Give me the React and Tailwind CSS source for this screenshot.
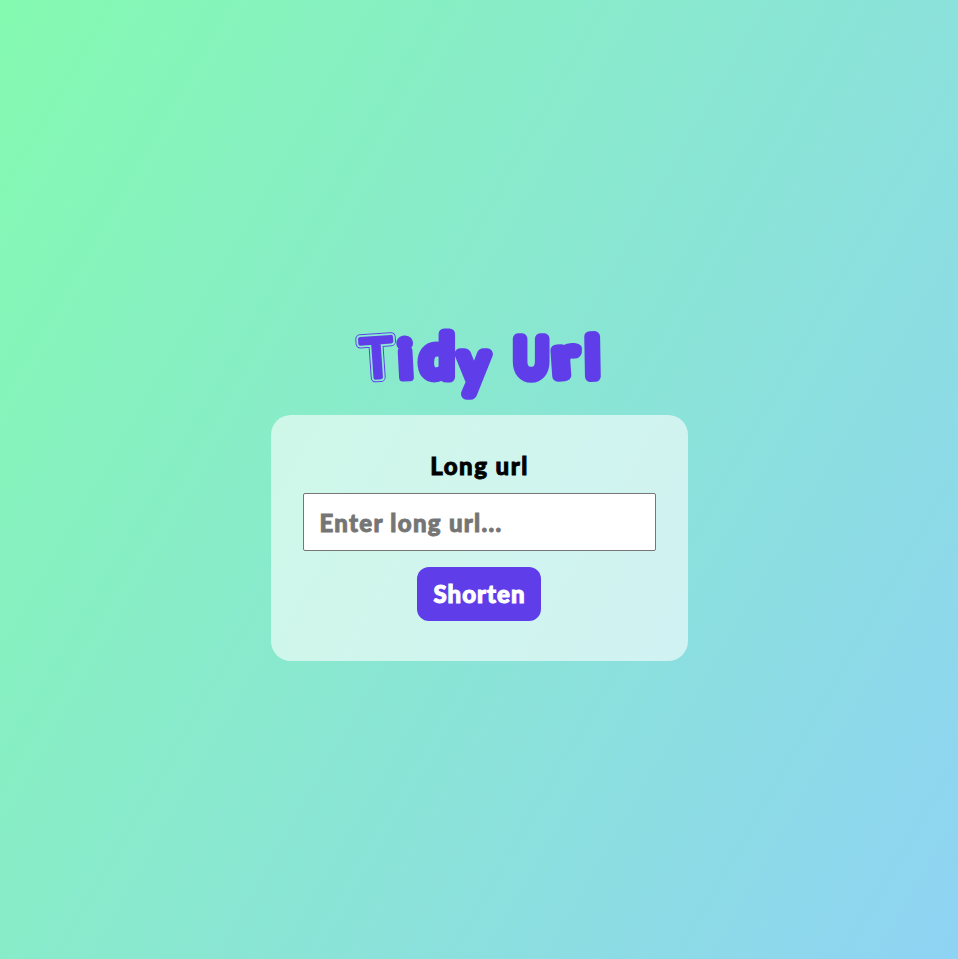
import React from "react";

function Title() {
  return (
    <h1 className="h-[90px] w-[260px]">
      <svg viewBox="350 325 260 90" className="block h-[90px] w-[260px] overflow-visible" fill="#5f3eea" stroke="#5f3eea" strokeWidth="11" strokeLinejoin="round" strokeLinecap="round" fontFamily="Lato, sans-serif" fontWeight="400" fontSize="55" aria-label="Tidy Url">
        <g transform="rotate(-4 376 357)" fontSize="55">
          <text x="361.5" y="377.5" strokeWidth="9.6">T</text>
          <text x="361.5" y="377.5" stroke="#89ebcf" strokeWidth="7.6">T</text>
          <text x="361.5" y="377.5" strokeWidth="4.2">T</text>
        </g>
        <text transform="translate(400.5 378) rotate(-3) scale(1.06 1)" fontSize="52" fontWeight="700" strokeWidth="7.5">i</text>
        <text transform="translate(421.5 376.5) scale(1.02 1)" fontSize="58" strokeWidth="11">d</text>
        <text transform="translate(460.5 384) scale(1 1.06)" fontSize="55">y</text>
        <text transform="translate(515 376.5) scale(.88 1)" fontSize="53" strokeWidth="11.5">U</text>
        <text transform="translate(555.5 376.5) rotate(-4) scale(1.22 1)" fontSize="52">r</text>
        <text transform="translate(587.5 376.5) rotate(-1)" fontSize="54">l</text>
      </svg>
    </h1>
  );
}

export default function App() {
  return (
    <main className="flex h-[959px] w-full flex-col items-center overflow-hidden bg-[linear-gradient(120deg,#84fab0_0%,#8fd3f4_100%)] pt-[325px] font-['Lato',sans-serif] font-black text-black">
      <Title />
      <form className="flex h-[246px] w-[417px] flex-col items-center rounded-[20px] bg-white/60 px-8 pt-8" onSubmit={(e) => e.preventDefault()}>
        <label htmlFor="long-url" className="h-[46px] pl-px text-[24px] leading-[38px] tracking-[1.5px] [-webkit-text-stroke:0.9px_#000]">Long url</label>
        <input id="long-url" placeholder="Enter long url..." className="h-[58px] w-[353px] rounded-[2px] border border-[#767676] bg-white px-4 text-[24px] tracking-[1.3px] outline-none placeholder:text-[#757575] placeholder:[-webkit-text-stroke:0.9px_#757575]" />
        <button className="mt-4 h-[54px] w-[124px] rounded-xl bg-[#5f3eea] pl-[1px] text-[24px] tracking-[1px] text-white [-webkit-text-stroke:1px_#fff]">Shorten</button>
      </form>
    </main>
  );
}
